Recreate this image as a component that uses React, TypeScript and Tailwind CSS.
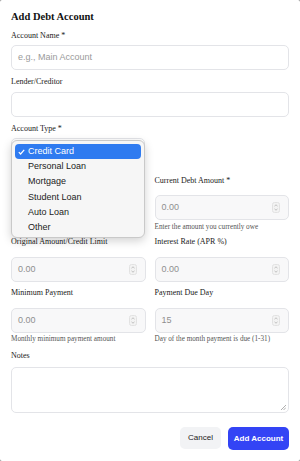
import React from "react"

// ─── Fonts ────────────────────────────────────────────────────────────────────

const SERIF = "font-['Liberation_Serif',serif]"
const SANS = "font-['Liberation_Sans',Arial,sans-serif]"

// ─── Pieces ───────────────────────────────────────────────────────────────────

function Label({ children, className = "" }: { children: React.ReactNode; className?: string }) {
  return (
    <div className={`${SERIF} text-[8px] leading-[10px] text-[#1a1a1a] ${className}`}>{children}</div>
  )
}

function Help({ children, className = "" }: { children: React.ReactNode; className?: string }) {
  return (
    <div className={`${SERIF} text-[7.2px] leading-[9px] text-[#555] ${className}`}>{children}</div>
  )
}

function Spinner() {
  return (
    <svg width="8" height="11" viewBox="0 0 8 11" className="shrink-0">
      <rect x="0.5" y="0.5" width="7" height="10" rx="2" fill="#f3f3f3" stroke="#e2e2e2" />
      <path d="M2.5 4.1 L4 2.8 L5.5 4.1" fill="none" stroke="#a8a8a8" strokeWidth="0.7" />
      <path d="M2.5 6.9 L4 8.2 L5.5 6.9" fill="none" stroke="#a8a8a8" strokeWidth="0.7" />
    </svg>
  )
}

function NumberField({ value, className = "" }: { value: string; className?: string }) {
  return (
    <div
      className={`flex h-[25px] items-center justify-between rounded-[5px] border border-[#e3e4e8] bg-[#f8f8f9] pl-[6px] pr-[8px] ${className}`}
    >
      <span className={`${SANS} text-[9px] text-[#8f8f8f]`}>{value}</span>
      <Spinner />
    </div>
  )
}

// ─── Native select popup ──────────────────────────────────────────────────────

const ACCOUNT_TYPES = ["Credit Card", "Personal Loan", "Mortgage", "Student Loan", "Auto Loan", "Other"]

function SelectPopup() {
  return (
    <div className="absolute left-[11px] top-[140px] h-[98px] w-[134px] rounded-[6px] border border-[#c9c9c9] bg-[#f6f6f6] px-[3px] pt-[3px] shadow-[0_3px_10px_rgba(0,0,0,0.18)]">
      {ACCOUNT_TYPES.map((t, i) => (
        <div
          key={t}
          className={`${SANS} flex h-[15.3px] items-center rounded-[4px] text-[9px] ${
            i === 0 ? "bg-[#2f7bf0] text-white" : "text-[#222]"
          }`}
        >
          <span className="flex w-[13px] shrink-0 justify-center">
            {i === 0 && (
              <svg width="7" height="6" viewBox="0 0 7 6">
                <path d="M0.8 3.2 L2.6 5 L6.2 0.8" fill="none" stroke="white" strokeWidth="1.2" />
              </svg>
            )}
          </span>
          {t}
        </div>
      ))}
    </div>
  )
}

// ─── App ──────────────────────────────────────────────────────────────────────

export default function App() {
  return (
    <div className="h-[461px] w-[300px] bg-[#8a8a8a]">
      <div className="relative flex h-full w-full flex-col rounded-[2px] bg-white px-[11px] pt-[10px]">
        <h1 className={`${SERIF} text-[10.5px] font-bold leading-[13px] text-[#111]`}>Add Debt Account</h1>

        {/* Account name */}
        <Label className="mt-[8px]">Account Name *</Label>
        <div className="mt-[4px] flex h-[25px] items-center rounded-[5px] border border-[#e3e4e8] bg-white pl-[6px]">
          <span className={`${SANS} text-[9px] text-[#9a9a9a]`}>e.g., Main Account</span>
        </div>

        {/* Lender */}
        <Label className="mt-[7px]">Lender/Creditor</Label>
        <div className="mt-[5px] h-[25px] rounded-[5px] border border-[#e3e4e8] bg-white" />

        {/* Account type (closed select, covered by its open popup) */}
        <Label className="mt-[7px]">Account Type *</Label>
        <div className="mt-[4px] h-[24px] w-[134px] rounded-[5px] border border-[#e3e4e8] bg-white" />

        {/* Balance row */}
        <div className="mt-[14px] grid grid-cols-2 gap-x-[9px]">
          <div />
          <div className="flex flex-col">
            <Label>Current Debt Amount *</Label>
            <NumberField value="0.00" className="mt-[9px]" />
            <Help className="mt-[3px]">Enter the amount you currently owe</Help>
          </div>
        </div>

        {/* Original / APR */}
        <div className="mt-[5px] grid grid-cols-2 gap-x-[9px]">
          <div className="flex flex-col">
            <Label>Original Amount/Credit Limit</Label>
            <NumberField value="0.00" className="mt-[10px]" />
          </div>
          <div className="flex flex-col">
            <Label>Interest Rate (APR %)</Label>
            <NumberField value="0.00" className="mt-[10px]" />
          </div>
        </div>

        {/* Payment */}
        <div className="mt-[6px] grid grid-cols-2 gap-x-[9px]">
          <div className="flex flex-col">
            <Label>Minimum Payment</Label>
            <NumberField value="0.00" className="mt-[10px]" />
            <Help className="mt-[2px]">Monthly minimum payment amount</Help>
          </div>
          <div className="flex flex-col">
            <Label>Payment Due Day</Label>
            <NumberField value="15" className="mt-[10px]" />
            <Help className="mt-[2px]">Day of the month payment is due (1-31)</Help>
          </div>
        </div>

        {/* Notes */}
        <Label className="mt-[7px]">Notes</Label>
        <div className="relative mt-[6px] h-[46px] rounded-[5px] border border-[#e3e4e8] bg-white">
          <svg width="6" height="6" viewBox="0 0 6 6" className="absolute bottom-[2px] right-[2px]">
            <path d="M1 6 L6 1 M3.5 6 L6 3.5" stroke="#9a9a9a" strokeWidth="0.8" />
          </svg>
        </div>

        {/* Actions */}
        <div className="mt-[14px] flex justify-end gap-[7px]">
          <button
            type="button"
            className={`${SANS} h-[22px] w-[41px] rounded-[5px] bg-[#f2f3f5] text-[8px] text-[#222]`}
          >
            Cancel
          </button>
          <button
            type="button"
            className={`${SANS} h-[23px] w-[61px] rounded-[5px] bg-[#3344f5] text-[8px] font-bold text-white`}
          >
            Add Account
          </button>
        </div>

        <SelectPopup />
      </div>
    </div>
  )
}
